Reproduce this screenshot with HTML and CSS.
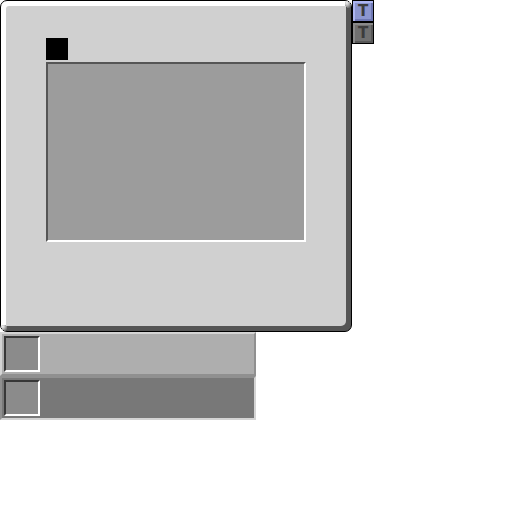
FILE: index.html
```
<!DOCTYPE html>
<html lang="en">
<head>
<meta charset="utf-8">
<title>Container</title>
<link rel="stylesheet" href="styles.css">
</head>
<body>
<main class="sheet">
  <div class="top">
    <section class="panel">
      <svg class="corner corner-tr" viewBox="0 0 8 8" shape-rendering="crispEdges"><defs><radialGradient id="bead" cx=".3" cy=".25" r=".8"><stop offset="0" stop-color="#f0f0f0"/><stop offset=".4" stop-color="#c4c4c4"/><stop offset="1" stop-color="#6a6a6a"/></radialGradient></defs><path fill="url(#bead)" d="M2 1h2v1h2v2h1v3H6v1H3V7H2V6H1V2h1z"/></svg>
      <svg class="corner corner-bl" viewBox="0 0 8 8" shape-rendering="crispEdges"><path fill="url(#bead)" d="M2 1h4v1h1v4H6v1H4V6H2V4H1V2h1z"/></svg>
      <div class="face">
        <div class="marker"></div>
        <div class="screen"></div>
      </div>
    </section>
    <div class="tabs">
      <button class="tab tab-on" type="button">T</button>
      <button class="tab tab-off" type="button">T</button>
    </div>
  </div>
  <div class="row row-up"><div class="slot"></div></div>
  <div class="row row-down"><div class="slot"></div></div>
</main>
</body>
</html>
```
FILE: styles.css
```
* { box-sizing: border-box; }
body { margin: 0; background: #fff; font-family: "Liberation Sans", sans-serif; }
.top { display: flex; align-items: flex-start; }
.panel {
  position: relative;
  flex: 0 1 352px;
  padding: 5px;
  border: 1px solid #000;
  border-radius: 7px;
  background: linear-gradient(to top left, #555 50%, #fff 50%);
}
.face { padding: 32px 40px 84px; border-radius: 3px 0 5px 0; background: #d0d0d0; }
.marker { width: 22px; height: 22px; margin-bottom: 2px; background: #000; }
.screen {
  height: 180px;
  border: 2px solid;
  border-color: #555 #fff #fff #555;
  background: #9c9c9c;
}
.corner { position: absolute; width: 8px; height: 8px; }
.corner-tr { top: -1px; right: -1px; }
.corner-bl { bottom: -1px; left: -1px; }
.tabs { display: flex; flex-direction: column; }
.tab {
  width: 22px;
  height: 22px;
  padding: 0;
  border: 1px solid #000;
  font: bold 15px/18px "DejaVu Sans", sans-serif;
  color: #3c3c3c;
}
.tab-on { background: #8c96cf; box-shadow: inset 2px 2px #adb5f0, inset -2px -2px #6f78b4; }
.tab-off { background: #707070; box-shadow: inset 2px 2px #8a8a8a, inset -2px -2px #585858; }
.row { max-width: 256px; padding: 2px; border: 2px solid; }
.row-up { background: #aeaeae; border-color: #d4d4d4 #909090 #909090 #d4d4d4; }
.row-down { background: #787878; border-color: #909090 #d4d4d4 #d4d4d4 #909090; }
.slot {
  width: 36px;
  height: 36px;
  border: 2px solid;
  border-color: #373737 #fff #fff #373737;
  background: #8b8b8b;
}
```
